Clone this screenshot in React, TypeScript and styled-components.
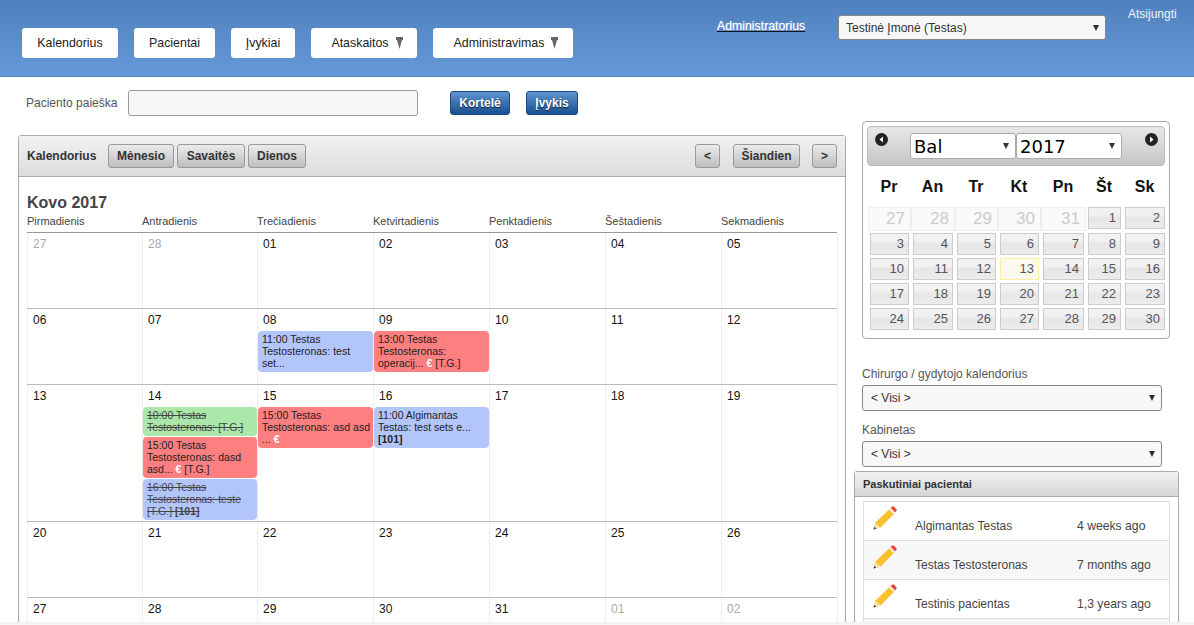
import React from 'react';
import styled, { createGlobalStyle, css } from 'styled-components';

const GlobalStyle = createGlobalStyle`
    html, body {
        margin: 0;
        padding: 0;
        height: 625px;
        overflow: hidden;
        background: #fff;
        font-family: "Liberation Sans", Arial, sans-serif;
        font-size: 12px;
        color: #333;
    }
    #root {
        height: 625px;
        overflow: hidden;
    }
    * { box-sizing: border-box; }
`;

const Header = styled.header`
    height: 77px;
    background: linear-gradient(to bottom, #4f80bd 0%, #6699d9 100%);
    border-bottom: 1px solid #5a84b8;
    display: flex;
    align-items: flex-start;
`;

const Nav = styled.nav`
    display: flex;
    gap: 16px;
    padding: 28px 0 0 22px;
    width: 717px;
`;

const NavButton = styled.a<{ $w: number; $drop?: boolean }>`
    width: ${(p) => p.$w}px;
    height: 30px;
    background: #fff;
    border-radius: 3px;
    color: #222;
    font-size: 12.4px;
    display: flex;
    align-items: center;
    justify-content: center;
    gap: 6px;
    ${(p) => p.$drop && css`padding-left: 7px;`}
`;

const UserLink = styled.a`
    width: 121px;
    padding-top: 19px;
    font-size: 12.3px;
    color: #fff;
    text-decoration: underline;
    text-decoration-color: #111;
    text-shadow: 0 0 1px rgba(255, 255, 255, 0.6);
`;

const Logout = styled.a`
    margin: 7px 0 0 22px;
    color: #eef3fa;
    font-size: 12px;
`;

const SelectWrap = styled.div<{ $w: number; $h?: number }>`
    position: relative;
    width: ${(p) => p.$w}px;
    height: ${(p) => p.$h ?? 26}px;
    flex: none;
    &::after {
        content: '';
        position: absolute;
        right: 7px;
        top: 50%;
        margin-top: -3px;
        border-left: 3px solid transparent;
        border-right: 3px solid transparent;
        border-top: 6px solid #333;
        pointer-events: none;
    }
`;

const NativeSelect = styled.select<{ $big?: boolean; $pad?: number }>`
    appearance: none;
    width: 100%;
    height: 100%;
    display: block;
    border: 1px solid ${(p) => (p.$big ? '#aaa' : '#888')};
    border-radius: 3px;
    background: ${(p) => (p.$big ? '#fff' : '#f7f7f7')};
    color: ${(p) => (p.$big ? '#000' : '#333')};
    font-family: ${(p) => (p.$big ? '"DejaVu Sans", sans-serif' : '"Liberation Sans", Arial, sans-serif')};
    font-size: ${(p) => (p.$big ? '18px' : '12px')};
    padding: 0 0 0 ${(p) => p.$pad ?? 7}px;
    outline: none;
`;

const CompanySelect = styled(SelectWrap)`
    margin-top: 15px;
`;

const SearchRow = styled.div`
    display: flex;
    align-items: center;
    height: 58px;
    padding: 0 0 6px 26px;
`;

const SearchLabel = styled.label`
    width: 102px;
    color: #555;
    font-size: 12px;
`;

const SearchInput = styled.input`
    width: 290px;
    height: 26px;
    border: 1px solid #999;
    border-radius: 3px;
    background: #f7f7f7;
    margin-right: 32px;
`;

const BlueButton = styled.button<{ $w: number }>`
    width: ${(p) => p.$w}px;
    height: 24px;
    margin-right: 16px;
    padding: 0;
    border: 1px solid #164a83;
    border-radius: 3px;
    background: linear-gradient(to bottom, #5f93d0 0%, #17508f 100%);
    color: #fff;
    font-family: inherit;
    font-size: 12px;
    font-weight: bold;
    text-shadow: 0 1px 1px #123;
`;

const Main = styled.div`
    display: flex;
    align-items: flex-start;
    padding-left: 18px;
`;

const CalendarPanel = styled.section`
    width: 828px;
    flex: none;
    border: 1px solid #aaa;
    border-radius: 3px 3px 0 0;
`;

const CalendarBar = styled.div`
    height: 41px;
    display: flex;
    align-items: center;
    padding: 0 8px;
    background: linear-gradient(to bottom, #f2f2f2 0%, #dcdcdc 100%);
    border-bottom: 1px solid #aaa;
`;

const BarTitle = styled.span`
    font-weight: bold;
    color: #333;
    width: 81px;
`;

const GreyButton = styled.button<{ $w: number; $ml?: number }>`
    width: ${(p) => p.$w}px;
    height: 24px;
    margin-left: ${(p) => p.$ml ?? 3}px;
    padding: 0;
    border: 1px solid #999;
    border-radius: 3px;
    background: linear-gradient(to bottom, #ececec 0%, #bdbdbd 100%);
    color: #333;
    font-family: inherit;
    font-size: 12px;
    font-weight: bold;
`;

const Spacer = styled.div`
    flex: 1;
`;

const CalendarBody = styled.div`
    padding: 17px 8px 0 8px;
`;

const MonthTitle = styled.h2`
    margin: 0;
    font-size: 16px;
    line-height: 18px;
    font-weight: bold;
    color: #444;
`;

const WeekHeader = styled.div`
    display: grid;
    grid-template-columns: 115px 115px 116px 116px 116px 116px 116px;
    height: 21px;
    padding-top: 3px;
    border-bottom: 1px solid #999;
    font-size: 11px;
    color: #444;
`;

const WeekRow = styled.div<{ $h: number }>`
    display: grid;
    grid-template-columns: 116px 115px 116px 116px 116px 116px 116px;
    height: ${(p) => p.$h}px;
    border-bottom: 1px solid #bbb;
`;

const DayCell = styled.div`
    border-right: 1px solid #eee;
    &:first-child { border-left: 1px solid #eee; }
`;

const DayNumber = styled.div<{ $muted?: boolean }>`
    height: 22px;
    padding: 4px 0 0 5px;
    font-size: 12px;
    line-height: 14px;
    color: ${(p) => (p.$muted ? '#aaa' : '#111')};
`;

const EVENT_COLORS = { blue: '#b3c6fc', red: '#fe7f7f', green: '#abe7a9' };

const EventCard = styled.div<{ $color: keyof typeof EVENT_COLORS; $done?: boolean }>`
    margin-bottom: 1px;
    padding: 2px 1px 3px 4px;
    border-radius: 4px;
    background: ${(p) => EVENT_COLORS[p.$color]};
    font-size: 10.5px;
    line-height: 12px;
    color: #222;
    ${(p) => p.$done && css`
        text-decoration: line-through;
        color: #444;
    `}
`;

const Euro = styled.b`
    color: #fff;
`;

const SideColumn = styled.aside`
    width: 308px;
    margin-left: 16px;
    margin-top: -14px;
    flex: none;
`;

const DatePicker = styled.div`
    height: 218px;
    border: 1px solid #aaa;
    border-radius: 4px;
    padding: 4px;
`;

const PickerHead = styled.div`
    position: relative;
    height: 40px;
    display: flex;
    justify-content: center;
    padding-top: 6px;
    border: 1px solid #bbb;
    border-radius: 4px;
    background: linear-gradient(to bottom, #e8e8e8 0%, #c6c6c6 100%);
`;

const PickerArrow = styled.span<{ $side: 'left' | 'right'; $off: number }>`
    position: absolute;
    top: 6px;
    ${(p) => p.$side}: ${(p) => p.$off}px;
    width: 13px;
    height: 13px;
    display: block;
`;

const PickerGrid = styled.div`
    display: grid;
    grid-template-columns: 43px 44px 43px 43px 45px 37px 44px;
    grid-template-rows: 41px 26px 25px 25px 25px 25px;
    margin-left: 1px;
`;

const WeekDay = styled.div`
    font-size: 16px;
    font-weight: bold;
    color: #111;
    text-align: center;
    padding: 12px 1px 0 0;
`;

const PickerDay = styled.div<{ $off?: boolean; $today?: boolean }>`
    height: ${(p) => (p.$off ? 24 : 22)}px;
    margin: 0 2px;
    padding-right: 4px;
    text-align: right;
    font-size: 13px;
    line-height: 20px;
    color: #555;
    border: 1px solid #ccc;
    background: linear-gradient(to bottom, #f1f1f1 0%, #f1f1f1 35%, #e6e6e6 50%, #ececec 100%);
    ${(p) => p.$off && css`
        margin: 0;
        padding-right: 5px;
        font-size: 17px;
        line-height: 22px;
        color: #ccc;
        border-color: #eee;
        background: #fafafa;
    `}
    ${(p) => p.$today && css`
        background: #fbf9ee;
        border-color: #fcefa1;
    `}
`;

const FieldLabel = styled.div<{ $top: number }>`
    margin-top: ${(p) => p.$top}px;
    height: 18px;
    color: #555;
    font-size: 12px;
    line-height: 14px;
`;

const RecentPanel = styled.section`
    width: 325px;
    margin: 4px 0 0 -8px;
    border: 1px solid #aaa;
    border-radius: 3px 3px 0 0;
    height: 200px;
`;

const RecentHead = styled.div`
    height: 25px;
    padding: 0 8px;
    display: flex;
    align-items: center;
    font-size: 11px;
    font-weight: bold;
    color: #333;
    background: linear-gradient(to bottom, #f2f2f2 0%, #d6d6d6 100%);
    border-bottom: 1px solid #aaa;
`;

const RecentList = styled.div`
    margin: 4px 8px 0;
    border: 1px solid #ddd;
    border-bottom: none;
`;

const RecentRow = styled.div<{ $alt?: boolean }>`
    height: 39px;
    display: flex;
    background: ${(p) => (p.$alt ? '#f7f7f7' : '#fff')};
    border-bottom: 1px solid #ddd;
    padding: 4px 0 0 8px;
`;

const RecentName = styled.span`
    width: 162px;
    margin-left: 18px;
    padding-top: 13px;
    color: #444;
`;

const RecentTime = styled.span`
    padding-top: 13px;
    font-size: 12.2px;
    color: #444;
`;

const BottomEdge = styled.div`
    position: fixed;
    left: 0;
    right: 0;
    bottom: 0;
    height: 3px;
    background: linear-gradient(to bottom, #eee, #f8f8f8);
`;

const DropMark = () => (
    <svg width="9" height="12" viewBox="0 0 9 12" fill="#666">
        <path d="M1 0h7v3H7l-2.5 9L2 3H1z" />
    </svg>
);

const RoundArrow = ({ dir }: { dir: 'left' | 'right' }) => (
    <svg width="13" height="13" viewBox="0 0 13 13">
        <circle cx="6.5" cy="6.5" r="6.5" fill="#222" />
        <path d={dir === 'left' ? 'M8 3.5v6L4.5 6.5z' : 'M5 3.5v6L8.5 6.5z'} fill="#fff" />
    </svg>
);

const Pencil = () => (
    <svg width="25" height="25" viewBox="0 0 25 25">
        <path d="M1.5 23.5l2-7L18 2.5l5 4.5L8.5 21.5z" fill="#fbc02d" />
        <path d="M1.5 23.5l2-7 5 5z" fill="#fbe3a8" />
        <path d="M1.5 23.5l.8-2.8 2 2z" fill="#37474f" />
        <path d="M18.5 2l1.5-1.2a1.4 1.4 0 0 1 2 0l2.2 2.2a1.4 1.4 0 0 1 0 2L23 6.5z" fill="#f44336" />
        <path d="M17 3.5l1.5-1.5 4.5 4.5L21.5 8z" fill="#eeeeee" />
    </svg>
);

type CalEvent = { color: keyof typeof EVENT_COLORS; done?: boolean; body: React.ReactNode };

const weeks: { h: number; days: { n: string; muted?: boolean; events?: CalEvent[] }[] }[] = [
    { h: 76, days: [{ n: '27', muted: true }, { n: '28', muted: true }, { n: '01' }, { n: '02' }, { n: '03' }, { n: '04' }, { n: '05' }] },
    {
        h: 76,
        days: [
            { n: '06' },
            { n: '07' },
            { n: '08', events: [{ color: 'blue', body: <>11:00 Testas Testosteronas: test set...</> }] },
            { n: '09', events: [{ color: 'red', body: <>13:00 Testas Testosteronas: operacij... <Euro>€</Euro> [T.G.]</> }] },
            { n: '10' },
            { n: '11' },
            { n: '12' },
        ],
    },
    {
        h: 137,
        days: [
            { n: '13' },
            {
                n: '14',
                events: [
                    { color: 'green', done: true, body: <>10:00 Testas Testosteronas: [T.G.]</> },
                    { color: 'red', body: <>15:00 Testas Testosteronas: dasd asd... <Euro>€</Euro> [T.G.]</> },
                    { color: 'blue', done: true, body: <>16:00 Testas Testosteronas: teste [T.G.] <b>[101]</b></> },
                ],
            },
            { n: '15', events: [{ color: 'red', body: <>15:00 Testas Testosteronas: asd asd ... <Euro>€</Euro></> }] },
            { n: '16', events: [{ color: 'blue', body: <>11:00 Algimantas Testas: test sets e... <b>[101]</b></> }] },
            { n: '17' },
            { n: '18' },
            { n: '19' },
        ],
    },
    { h: 76, days: ['20', '21', '22', '23', '24', '25', '26'].map((n) => ({ n })) },
    {
        h: 76,
        days: [{ n: '27' }, { n: '28' }, { n: '29' }, { n: '30' }, { n: '31' }, { n: '01', muted: true }, { n: '02', muted: true }],
    },
];

const weekNames = ['Pirmadienis', 'Antradienis', 'Trečiadienis', 'Ketvirtadienis', 'Penktadienis', 'Šeštadienis', 'Sekmadienis'];
const pickerNames = ['Pr', 'An', 'Tr', 'Kt', 'Pn', 'Št', 'Sk'];
const recent = [
    { name: 'Algimantas Testas', time: '4 weeks ago' },
    { name: 'Testas Testosteronas', time: '7 months ago' },
    { name: 'Testinis pacientas', time: '1,3 years ago' },
    { name: '', time: '' },
];

const App = () => {
    const aprilDays = Array.from({ length: 30 }, (_, i) => i + 1);

    return (
        <>
            <GlobalStyle />
            <Header>
                <Nav>
                    <NavButton $w={96}>Kalendorius</NavButton>
                    <NavButton $w={81}>Pacientai</NavButton>
                    <NavButton $w={64}>Įvykiai</NavButton>
                    <NavButton $w={106} $drop>Ataskaitos <DropMark /></NavButton>
                    <NavButton $w={140} $drop>Administravimas <DropMark /></NavButton>
                </Nav>
                <UserLink>Administratorius</UserLink>
                <CompanySelect $w={268} $h={25}>
                    <NativeSelect defaultValue="t">
                        <option value="t">Testinė Įmonė (Testas)</option>
                    </NativeSelect>
                </CompanySelect>
                <Logout>Atsijungti</Logout>
            </Header>

            <SearchRow>
                <SearchLabel>Paciento paieška</SearchLabel>
                <SearchInput />
                <BlueButton $w={60}>Kortelė</BlueButton>
                <BlueButton $w={52}>Įvykis</BlueButton>
            </SearchRow>

            <Main>
                <CalendarPanel>
                    <CalendarBar>
                        <BarTitle>Kalendorius</BarTitle>
                        <GreyButton $w={66} $ml={0}>Mėnesio</GreyButton>
                        <GreyButton $w={68}>Savaitės</GreyButton>
                        <GreyButton $w={58}>Dienos</GreyButton>
                        <Spacer />
                        <GreyButton $w={25}>&lt;</GreyButton>
                        <GreyButton $w={67} $ml={13}>Šiandien</GreyButton>
                        <GreyButton $w={25} $ml={12}>&gt;</GreyButton>
                    </CalendarBar>
                    <CalendarBody>
                        <MonthTitle>Kovo 2017</MonthTitle>
                        <WeekHeader>
                            {weekNames.map((w) => <div key={w}>{w}</div>)}
                        </WeekHeader>
                        {weeks.map((week, i) => (
                            <WeekRow key={i} $h={week.h}>
                                {week.days.map((d) => (
                                    <DayCell key={d.n}>
                                        <DayNumber $muted={d.muted}>{d.n}</DayNumber>
                                        {d.events?.map((e, j) => (
                                            <EventCard key={j} $color={e.color} $done={e.done}>{e.body}</EventCard>
                                        ))}
                                    </DayCell>
                                ))}
                            </WeekRow>
                        ))}
                    </CalendarBody>
                </CalendarPanel>

                <SideColumn>
                    <DatePicker>
                        <PickerHead>
                            <PickerArrow $side="left" $off={7}><RoundArrow dir="left" /></PickerArrow>
                            <SelectWrap $w={106} $h={26}>
                                <NativeSelect $big $pad={3} defaultValue="b">
                                    <option value="b">Bal</option>
                                </NativeSelect>
                            </SelectWrap>
                            <SelectWrap $w={106} $h={26}>
                                <NativeSelect $big $pad={3} defaultValue="y">
                                    <option value="y">2017</option>
                                </NativeSelect>
                            </SelectWrap>
                            <PickerArrow $side="right" $off={6}><RoundArrow dir="right" /></PickerArrow>
                        </PickerHead>
                        <PickerGrid>
                            {pickerNames.map((n) => <WeekDay key={n}>{n}</WeekDay>)}
                            {[27, 28, 29, 30, 31].map((n) => <PickerDay key={n} $off>{n}</PickerDay>)}
                            {aprilDays.map((n) => <PickerDay key={n} $today={n === 13}>{n}</PickerDay>)}
                        </PickerGrid>
                    </DatePicker>

                    <FieldLabel $top={28}>Chirurgo / gydytojo kalendorius</FieldLabel>
                    <SelectWrap $w={300}>
                        <NativeSelect $pad={8} defaultValue="a"><option value="a">&lt; Visi &gt;</option></NativeSelect>
                    </SelectWrap>
                    <FieldLabel $top={12}>Kabinetas</FieldLabel>
                    <SelectWrap $w={300}>
                        <NativeSelect $pad={8} defaultValue="a"><option value="a">&lt; Visi &gt;</option></NativeSelect>
                    </SelectWrap>

                    <RecentPanel>
                        <RecentHead>Paskutiniai pacientai</RecentHead>
                        <RecentList>
                            {recent.map((r, i) => (
                                <RecentRow key={i} $alt={i % 2 === 1}>
                                    <Pencil />
                                    <RecentName>{r.name}</RecentName>
                                    <RecentTime>{r.time}</RecentTime>
                                </RecentRow>
                            ))}
                        </RecentList>
                    </RecentPanel>
                </SideColumn>
            </Main>
            <BottomEdge />
        </>
    );
};

export default App;
